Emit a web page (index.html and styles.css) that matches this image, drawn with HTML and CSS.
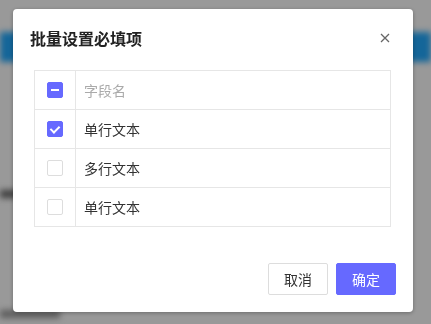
FILE: index.html
```html
<!DOCTYPE html>
<html lang="zh-CN">
<head>
    <meta charset="UTF-8">
    <meta name="viewport" content="width=device-width, initial-scale=1.0">
    <title>批量设置必填项</title>
    <link rel="stylesheet" href="styles.css">
</head>
<body>

    <!-- page behind the dialog -->
    <div class="page">
        <div class="page-bar"></div>
        <div class="page-line line-1"></div>
        <div class="page-line line-2"></div>
    </div>

    <div class="mask">
        <div class="dialog">
            <div class="dialog-header">
                <h2>批量设置必填项</h2>
                <span class="close">
                    <svg width="10" height="10" viewBox="0 0 10 10">
                        <path d="M1 1L9 9M9 1L1 9" stroke="#666" stroke-width="1.3" fill="none"/>
                    </svg>
                </span>
            </div>

            <div class="dialog-body">
                <table class="field-table">
                    <tr>
                        <td class="check-col"><span class="checkbox half"></span></td>
                        <td class="head-text">字段名</td>
                    </tr>
                    <tr>
                        <td class="check-col"><span class="checkbox checked"></span></td>
                        <td>单行文本</td>
                    </tr>
                    <tr>
                        <td class="check-col"><span class="checkbox"></span></td>
                        <td>多行文本</td>
                    </tr>
                    <tr>
                        <td class="check-col"><span class="checkbox"></span></td>
                        <td>单行文本</td>
                    </tr>
                </table>
            </div>

            <div class="dialog-footer">
                <button class="btn">取消</button>
                <button class="btn btn-primary">确定</button>
            </div>
        </div>
    </div>

</body>
</html>
```

FILE: styles.css
```css
body {
    margin: 0;
    padding: 0;
    font-family: 'Noto Sans CJK SC', 'Noto Sans', sans-serif;
    color: #333;
    background-color: #fff;
    overflow: hidden;
}

.page {
    height: 324px;
    padding-top: 32px;
    box-sizing: border-box;
    filter: blur(3px);
}

.page-bar {
    height: 30px;
    background-color: #22aaff;
}

.page-line {
    height: 8px;
    width: 60px;
    background-color: #666;
}

.line-1 {
    margin-top: 128px;
    width: 24px;
}

.line-2 {
    margin-top: 112px;
    width: 60px;
    background-color: #999;
}

.mask {
    position: fixed;
    top: 0;
    left: 0;
    right: 0;
    bottom: 0;
    background-color: rgba(0, 0, 0, 0.4);
}

.dialog {
    width: 400px;
    margin: 9px 0 0 13px;
    background-color: #fff;
    border-radius: 4px;
    box-shadow: 0 1px 4px rgba(0, 0, 0, 0.3);
}

.dialog-header {
    display: flex;
    align-items: center;
    justify-content: space-between;
    padding: 20px 23px 23px 17px;
}

.dialog-header h2 {
    margin: 0;
    font-size: 16px;
    line-height: 18px;
    font-weight: bold;
    color: #222;
}

.close {
    display: flex;
    width: 10px;
    height: 10px;
}

.dialog-body {
    padding: 0 22px 0 21px;
}

.field-table {
    width: 100%;
    border-collapse: collapse;
    font-size: 14px;
}

.field-table td {
    height: 38px;
    padding: 0 0 0 8px;
    border: 1px solid #e6e6e6;
}

.field-table .check-col {
    width: 40px;
    padding: 0;
    text-align: center;
}

.head-text {
    color: #aaa;
}

.checkbox {
    display: block;
    width: 14px;
    height: 14px;
    margin: 0 auto;
    border: 1px solid #ddd;
    border-radius: 2px;
    position: relative;
}

.checkbox.checked,
.checkbox.half {
    background-color: #6669ff;
    border-color: #6669ff;
}

.checkbox.half::after {
    content: '';
    position: absolute;
    left: 3px;
    top: 6px;
    width: 8px;
    height: 2px;
    background-color: #fff;
}

.checkbox.checked::after {
    content: '';
    position: absolute;
    left: 4px;
    top: 2px;
    width: 4px;
    height: 7px;
    border: solid #fff;
    border-width: 0 2px 2px 0;
    transform: rotate(45deg);
}

.dialog-footer {
    display: flex;
    justify-content: flex-end;
    gap: 8px;
    padding: 36px 17px 17px;
}

.btn {
    width: 60px;
    height: 32px;
    padding: 0;
    font-family: inherit;
    font-size: 14px;
    color: #333;
    background-color: #fff;
    border: 1px solid #ddd;
    border-radius: 2px;
    cursor: pointer;
}

.btn-primary {
    color: #fff;
    background-color: #6669ff;
    border-color: #6669ff;
}
```
